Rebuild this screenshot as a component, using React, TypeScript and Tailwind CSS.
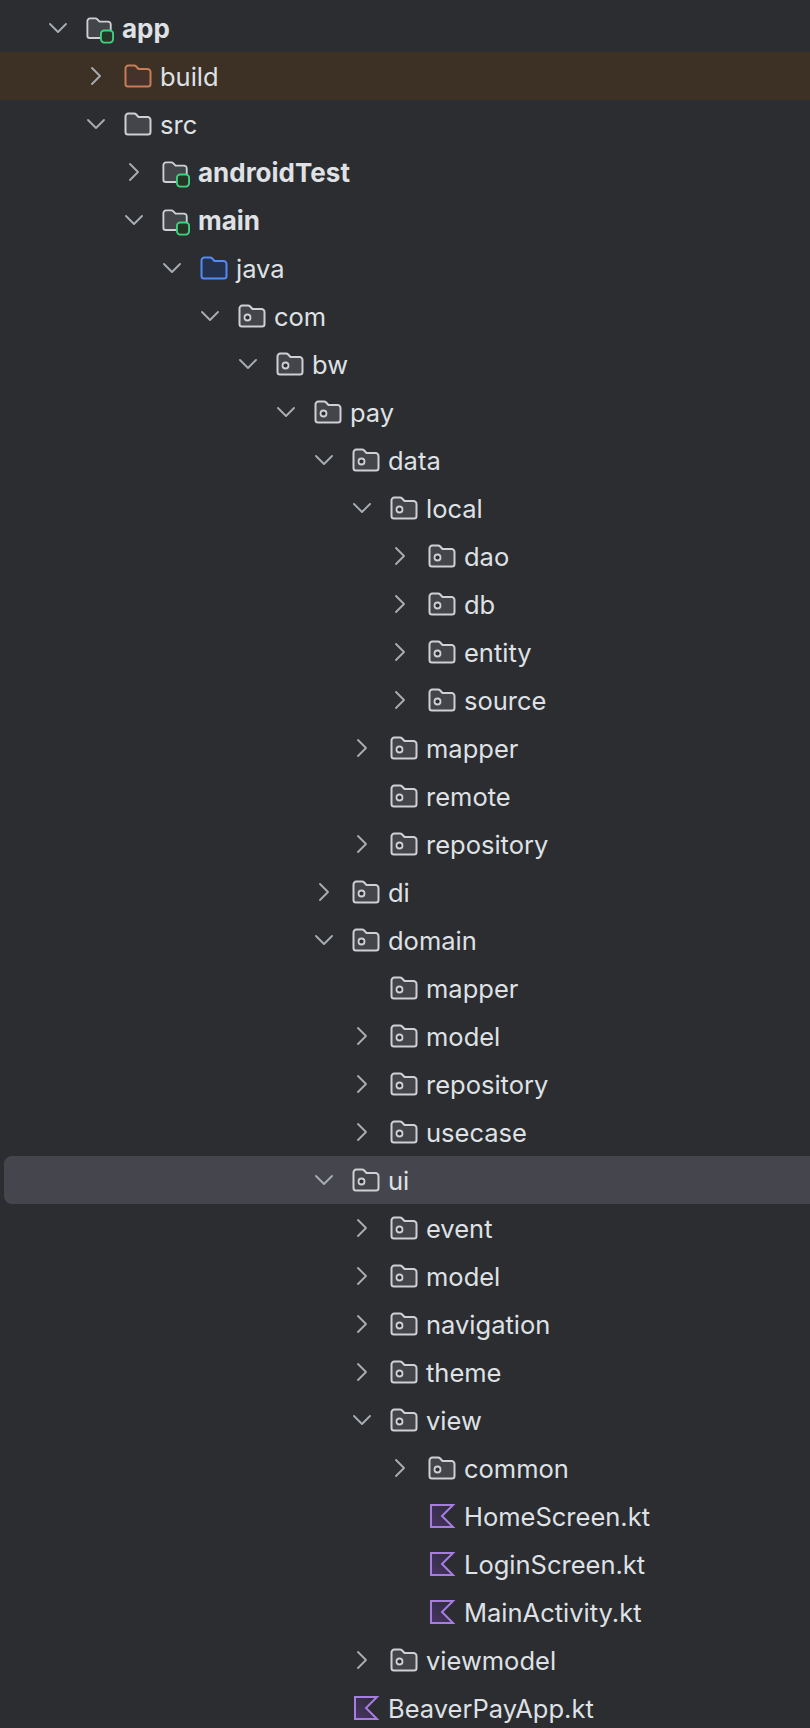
import { ChevronDown, ChevronRight } from "lucide-react";

type Kind = "module" | "excluded" | "plain" | "source" | "package" | "kotlin";
type Arrow = "open" | "closed" | "none";

type Node = {
  name: string;
  level: number;
  kind: Kind;
  arrow: Arrow;
};

const nodes: Node[] = [
  { name: "app", level: 0, kind: "module", arrow: "open" },
  { name: "build", level: 1, kind: "excluded", arrow: "closed" },
  { name: "src", level: 1, kind: "plain", arrow: "open" },
  { name: "androidTest", level: 2, kind: "module", arrow: "closed" },
  { name: "main", level: 2, kind: "module", arrow: "open" },
  { name: "java", level: 3, kind: "source", arrow: "open" },
  { name: "com", level: 4, kind: "package", arrow: "open" },
  { name: "bw", level: 5, kind: "package", arrow: "open" },
  { name: "pay", level: 6, kind: "package", arrow: "open" },
  { name: "data", level: 7, kind: "package", arrow: "open" },
  { name: "local", level: 8, kind: "package", arrow: "open" },
  { name: "dao", level: 9, kind: "package", arrow: "closed" },
  { name: "db", level: 9, kind: "package", arrow: "closed" },
  { name: "entity", level: 9, kind: "package", arrow: "closed" },
  { name: "source", level: 9, kind: "package", arrow: "closed" },
  { name: "mapper", level: 8, kind: "package", arrow: "closed" },
  { name: "remote", level: 8, kind: "package", arrow: "none" },
  { name: "repository", level: 8, kind: "package", arrow: "closed" },
  { name: "di", level: 7, kind: "package", arrow: "closed" },
  { name: "domain", level: 7, kind: "package", arrow: "open" },
  { name: "mapper", level: 8, kind: "package", arrow: "none" },
  { name: "model", level: 8, kind: "package", arrow: "closed" },
  { name: "repository", level: 8, kind: "package", arrow: "closed" },
  { name: "usecase", level: 8, kind: "package", arrow: "closed" },
  { name: "ui", level: 7, kind: "package", arrow: "open" },
  { name: "event", level: 8, kind: "package", arrow: "closed" },
  { name: "model", level: 8, kind: "package", arrow: "closed" },
  { name: "navigation", level: 8, kind: "package", arrow: "closed" },
  { name: "theme", level: 8, kind: "package", arrow: "closed" },
  { name: "view", level: 8, kind: "package", arrow: "open" },
  { name: "common", level: 9, kind: "package", arrow: "closed" },
  { name: "HomeScreen.kt", level: 9, kind: "kotlin", arrow: "none" },
  { name: "LoginScreen.kt", level: 9, kind: "kotlin", arrow: "none" },
  { name: "MainActivity.kt", level: 9, kind: "kotlin", arrow: "none" },
  { name: "viewmodel", level: 8, kind: "package", arrow: "closed" },
  { name: "BeaverPayApp.kt", level: 7, kind: "kotlin", arrow: "none" },
];

const FOLDER =
  "M1.5 5 a3 3 0 0 1 3 -3.5 h5.5 a3 3 0 0 1 2.2 1 l2.3 2.5 h9 a3 3 0 0 1 3 3 v12 a2.5 2.5 0 0 1 -2.5 2.5 h-20 a2.5 2.5 0 0 1 -2.5 -2.5 z";

function FolderIcon({ stroke, fill }: { stroke: string; fill: string }) {
  return (
    <svg width="28" height="24" viewBox="0 0 28 24" fill="none">
      <path d={FOLDER} fill={fill} stroke={stroke} strokeWidth="2" strokeLinejoin="round" />
    </svg>
  );
}

function PackageIcon() {
  return (
    <svg width="28" height="24" viewBox="0 0 28 24" fill="none">
      <path d={FOLDER} fill="#43454a" stroke="#ced0d6" strokeWidth="2" strokeLinejoin="round" />
      <circle cx="9.5" cy="13.5" r="3" fill="#2b2d30" stroke="#ced0d6" strokeWidth="1.8" />
    </svg>
  );
}

function ModuleIcon() {
  return (
    <svg width="30" height="29" viewBox="0 0 30 29" fill="none">
      <path d={FOLDER} fill="#43454a" stroke="#ced0d6" strokeWidth="2" strokeLinejoin="round" />
      <rect x="16" y="14.5" width="13" height="13" rx="3.5" fill="#253627" stroke="#3fd27f" strokeWidth="2" />
    </svg>
  );
}

function KotlinIcon() {
  return (
    <svg width="28" height="24" viewBox="0 0 28 24" fill="none">
      <defs>
        <linearGradient id="kt" x1="0" y1="1" x2="1" y2="0">
          <stop offset="0" stopColor="#4a3468" />
          <stop offset="1" stopColor="#2b2d30" />
        </linearGradient>
      </defs>
      <path d="M3 1 H25 L14 12 L25 23 H3 Z" fill="url(#kt)" stroke="#a77de3" strokeWidth="2" />
    </svg>
  );
}

function RowIcon({ kind }: { kind: Kind }) {
  if (kind === "module") return <ModuleIcon />;
  if (kind === "excluded") return <FolderIcon stroke="#c77d55" fill="#45322b" />;
  if (kind === "plain") return <FolderIcon stroke="#ced0d6" fill="#43454a" />;
  if (kind === "source") return <FolderIcon stroke="#548af7" fill="#25324d" />;
  if (kind === "kotlin") return <KotlinIcon />;
  return <PackageIcon />;
}

function Row({ node, band, inset = 0 }: { node: Node; band: string; inset?: number }) {
  const bold = node.kind === "module";
  return (
    <div
      className={`flex h-12 items-center ${band}`}
      style={{ paddingLeft: 44 + node.level * 38 - inset }}
    >
      <span className="flex w-7 shrink-0 justify-center text-[#a8adb4]">
        {node.arrow === "open" && <ChevronDown size={32} strokeWidth={1.4} className="shrink-0" />}
        {node.arrow === "closed" && <ChevronRight size={32} strokeWidth={1.4} className="shrink-0" />}
      </span>
      <span className="ml-[14px] flex h-6 w-[28px] shrink-0 items-start">
        <RowIcon kind={node.kind} />
      </span>
      <span
        className={`ml-2 pt-[2px] leading-none whitespace-nowrap text-[#dfe1e5] ${
          bold ? "text-[26px] font-bold" : "text-[25.5px] font-normal"
        }`}
      >
        {node.name}
      </span>
    </div>
  );
}

export default function App() {
  return (
    <div className="h-[1728px] overflow-hidden bg-[#2b2d30] pt-1 font-['Inter',sans-serif]">
      {nodes.map((node, i) => {
        if (node.name === "build") return <Row key={i} node={node} band="bg-[#3d3025]" />;
        if (node.name === "ui")
          return <Row key={i} node={node} band="ml-1 rounded-l-lg bg-[#45464d]" inset={4} />;
        return <Row key={i} node={node} band="" />;
      })}
    </div>
  );
}
